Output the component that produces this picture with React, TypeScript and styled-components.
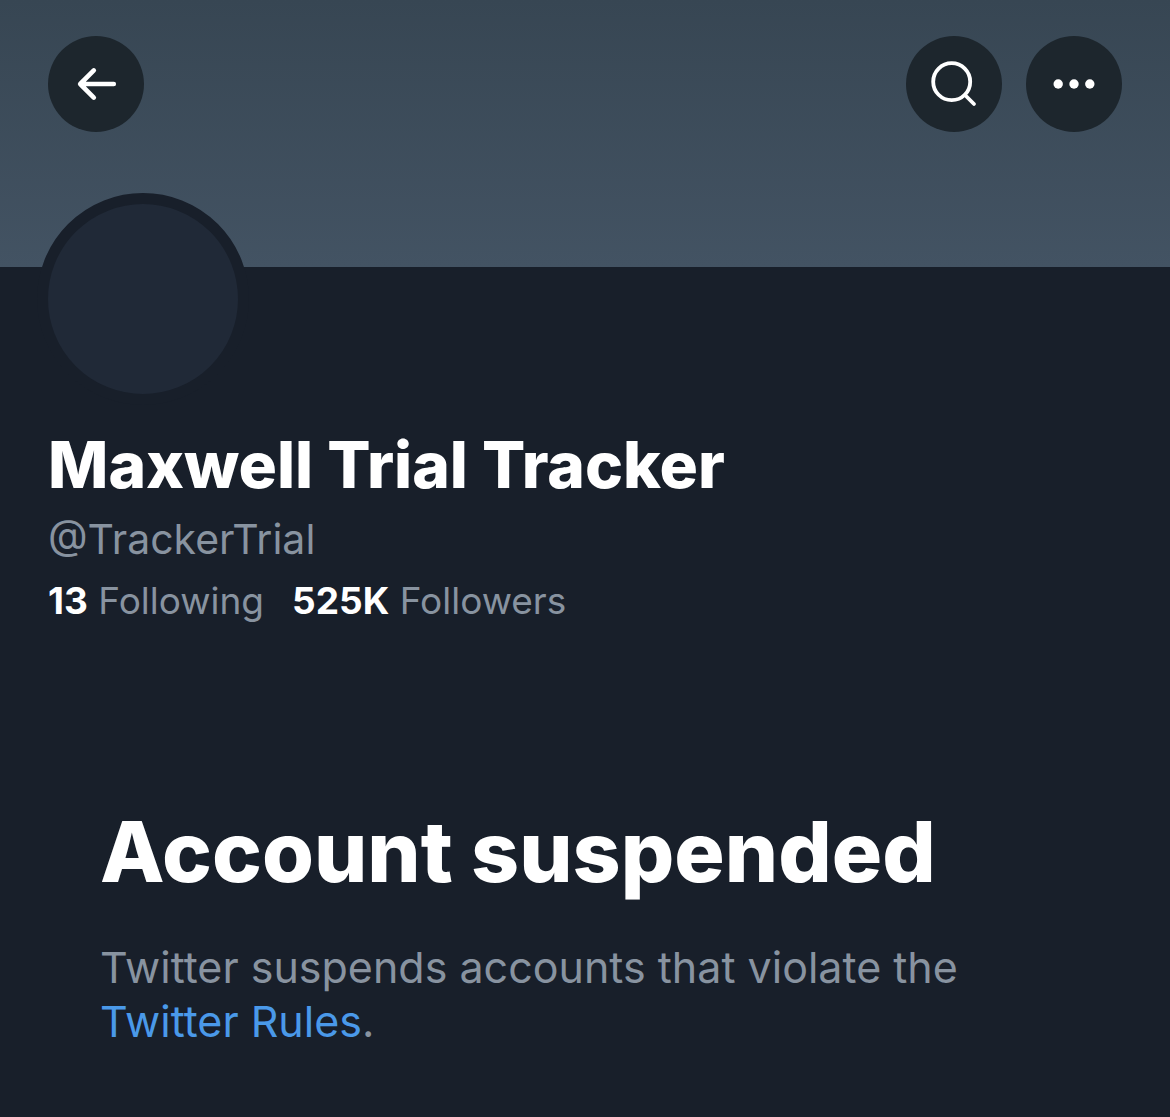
import React from "react";
import styled, { createGlobalStyle } from "styled-components";

const GlobalStyle = createGlobalStyle`
  * { box-sizing: border-box; }
  body {
    margin: 0;
    background: #181f2a;
    color: #ffffff;
    font-family: Inter, "Liberation Sans", sans-serif;
  }
  h1, h2, p { margin: 0; }
`;

const Page = styled.main`
  width: 100%;
  min-height: 100vh;
  background: #181f2a;
`;

const Banner = styled.header`
  display: flex;
  justify-content: space-between;
  height: 267px;
  padding: 36px 48px;
  background: linear-gradient(#374653, #435363);
`;

const Actions = styled.div`
  display: flex;
  gap: 24px;
`;

const RoundButton = styled.button`
  display: flex;
  align-items: center;
  justify-content: center;
  width: 96px;
  height: 96px;
  padding: 0;
  border: 0;
  border-radius: 50%;
  background: #1d262d;
  color: #ffffff;
  cursor: pointer;
`;

const Profile = styled.section`
  padding: 0 48px;
`;

const Avatar = styled.div`
  position: relative;
  width: 212px;
  height: 212px;
  margin: -74px 0 0 -11px;
  border: 11px solid #181f2a;
  border-radius: 50%;
  background: #202937;
`;

const Name = styled.h1`
  margin-top: 20px;
  font-size: 64px;
  line-height: 80px;
  font-weight: 800;
`;

const Handle = styled.p`
  color: #8893a0;
  font-size: 41px;
  line-height: 68px;
`;

const Stats = styled.div`
  display: flex;
  gap: 28px;
`;

const Stat = styled.a`
  color: #8893a0;
  font-size: 37px;
  line-height: 56px;
  text-decoration: none;
`;

const Count = styled.strong`
  color: #ffffff;
  font-weight: 700;
`;

const Notice = styled.section`
  padding: 171px 100px 48px;
`;

const Title = styled.h2`
  font-size: 84px;
  line-height: 104px;
  font-weight: 800;
`;

const Message = styled.p`
  margin-top: 36px;
  color: #8893a0;
  font-size: 43px;
  line-height: 54px;
`;

const RulesLink = styled.a`
  color: #4a99e9;
  text-decoration: none;
`;

export default function App() {
  return (
    <>
      <GlobalStyle />
      <Page>
        <Banner>
          <RoundButton aria-label="Back">
            <svg width="96" height="96" viewBox="0 0 96 96" fill="none" stroke="currentColor" strokeWidth="4.6" strokeLinecap="round" strokeLinejoin="round">
              <path d="M65.8 48H33M45.8 34.4L32.2 48L45.8 61.6" />
            </svg>
          </RoundButton>
          <Actions>
            <RoundButton aria-label="Search">
              <svg width="96" height="96" viewBox="0 0 96 96" fill="none" stroke="currentColor" strokeWidth="3.8" strokeLinecap="round">
                <circle cx="45.7" cy="45.7" r="18.5" />
                <path d="M59 59L68 68" />
              </svg>
            </RoundButton>
            <RoundButton aria-label="More">
              <svg width="96" height="96" viewBox="0 0 96 96" fill="currentColor">
                <circle cx="32.2" cy="48" r="4.7" />
                <circle cx="48" cy="48" r="4.7" />
                <circle cx="63.8" cy="48" r="4.7" />
              </svg>
            </RoundButton>
          </Actions>
        </Banner>
        <Profile>
          <Avatar />
          <Name>Maxwell Trial Tracker</Name>
          <Handle>@TrackerTrial</Handle>
          <Stats>
            <Stat href="#following"><Count>13</Count> Following</Stat>
            <Stat href="#followers"><Count>525K</Count> Followers</Stat>
          </Stats>
        </Profile>
        <Notice>
          <Title>Account suspended</Title>
          <Message>
            Twitter suspends accounts that violate the <RulesLink href="#rules">Twitter Rules</RulesLink>.
          </Message>
        </Notice>
      </Page>
    </>
  );
}
